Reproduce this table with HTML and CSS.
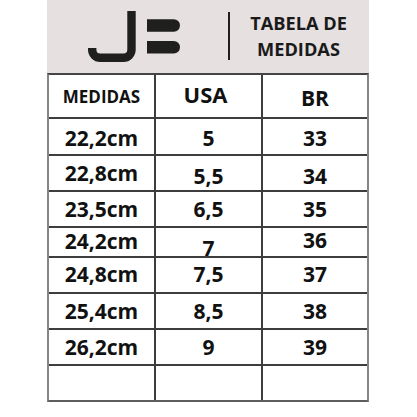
FILE: index.html
```html
<!DOCTYPE html>
<html lang="pt-BR">
<head>
<meta charset="utf-8">
<title>Tabela de Medidas</title>
<link rel="stylesheet" href="styles.css">
</head>
<body>
<div class="page">
  <header class="brand">
    <svg class="logo" width="92" height="52" viewBox="0 0 92 52" aria-label="JB">
      <path d="M4.2 37 V38.8 A8 8 0 0 0 12.2 46.8 H35.5 A8 8 0 0 0 43.5 38.8 V0" fill="none" stroke="#1f1f1d" stroke-width="8.4"/>
      <path d="M59 8.3 H85.8 A6.2 6.2 0 0 1 85.8 20.7 H59 Z" fill="#1f1f1d"/>
      <path d="M59 30 H85.75 A6.25 6.25 0 0 1 85.75 42.5 H59 Z" fill="#1f1f1d"/>
    </svg>
    <div class="sep"></div>
    <div class="title">TABELA DE<br>MEDIDAS</div>
  </header>
  <div class="sizes">
    <div class="cell head small">MEDIDAS</div>
    <div class="cell head usa">USA</div>
    <div class="cell head br">BR</div>

    <div class="cell dn2">22,2cm</div>
    <div class="cell dn2">5</div>
    <div class="cell dn2">33</div>

    <div class="cell">22,8cm</div>
    <div class="cell dn3">5,5</div>
    <div class="cell dn3">34</div>

    <div class="cell">23,5cm</div>
    <div class="cell">6,5</div>
    <div class="cell">35</div>

    <div class="cell up1">24,2cm</div>
    <div class="cell low">7</div>
    <div class="cell up2">36</div>

    <div class="cell up1">24,8cm</div>
    <div class="cell up1">7,5</div>
    <div class="cell up1">37</div>

    <div class="cell">25,4cm</div>
    <div class="cell">8,5</div>
    <div class="cell">38</div>

    <div class="cell">26,2cm</div>
    <div class="cell">9</div>
    <div class="cell">39</div>

    <div class="cell"></div>
    <div class="cell"></div>
    <div class="cell"></div>
  </div>
</div>
</body>
</html>
```
FILE: styles.css
```css
html, body {
  margin: 0;
  padding: 0;
  background: #ffffff;
}

body {
  font-family: "Open Sans", "Liberation Sans", sans-serif;
  color: #111111;
}

.page {
  margin-left: 47px;
  width: 322px;
}

.brand {
  height: 73px;
  background: #e6e0e0;
  display: flex;
  align-items: flex-start;
}

.logo {
  display: block;
  margin-top: 11px;
  margin-left: 41px;
}

.sep {
  width: 2px;
  height: 48px;
  background: #1f1f1d;
  margin-top: 12px;
  margin-left: 48px;
}

.title {
  flex: 1;
  margin-top: 10px;
  padding-right: 2px;
  text-align: center;
  font-weight: 700;
  font-size: 18.2px;
  line-height: 26px;
  color: #1a1a1a;
}

.sizes {
  display: grid;
  grid-template-columns: 105px 105px 104px;
  grid-template-rows: 42px 35px 34px 34px 28px 34px 34px 34px 34px;
  gap: 2px;
  background: #3d3d3d;
  border-top: 2px solid #454545;
  border-bottom: 2px solid #5e5e5e;
  border-left: 2px solid #858585;
  border-right: 2px solid #858585;
}

.cell {
  background: #ffffff;
  display: flex;
  align-items: center;
  justify-content: center;
  font-weight: 700;
  font-size: 21px;
  line-height: 1;
  box-sizing: border-box;
  color: #111111;
}

.head.small {
  font-size: 17px;
}

.head.usa {
  font-size: 22px;
  padding-bottom: 4px;
  padding-right: 6px;
}

.head.br {
  font-size: 21px;
  padding-top: 4px;
}

.dn2 { padding-top: 4px; }
.dn3 { padding-top: 7px; }
.up1 { padding-bottom: 2px; }
.up2 { padding-bottom: 4px; line-height: 18px; }

.low {
  align-items: flex-end;
  line-height: 16px;
}
```
